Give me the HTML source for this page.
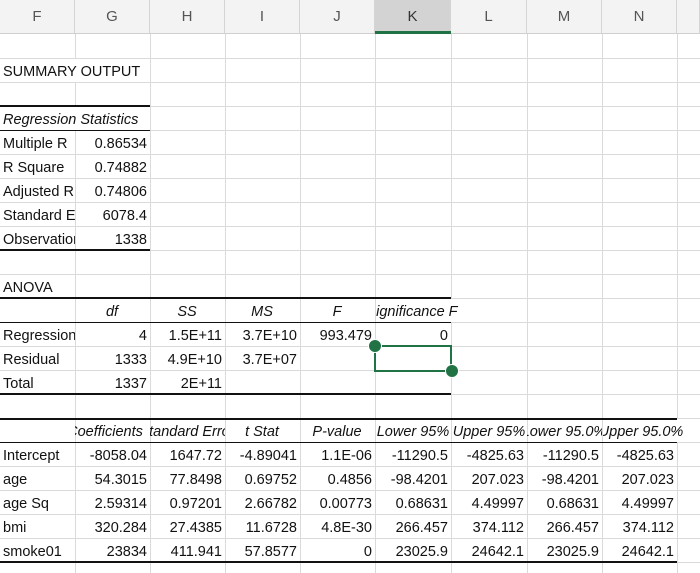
<!DOCTYPE html>
<html><head><meta charset="utf-8"><style>
body{margin:0;width:700px;height:573px;overflow:hidden;background:#fff;font-family:"Liberation Sans",Carlito,sans-serif;font-size:14.5px;color:#111;position:relative}
.a{position:absolute}
.c{position:absolute;height:23px;line-height:27px;overflow:hidden;white-space:nowrap;box-sizing:border-box;padding:0 3px}
.r{text-align:right}
.i{font-style:italic}
.m span{position:absolute;transform:translateX(-50%);white-space:nowrap}
.vl{position:absolute;top:0;width:1px;height:573px;background:#dadada}
.hl{position:absolute;left:0;width:700px;height:1px;background:#dadada}
.hd{position:absolute;top:0;height:33px;background:#f3f3f3;color:#555;text-align:center;line-height:34px;font-size:15px;border-right:1px solid #d4d4d4;box-sizing:border-box}
.k{position:absolute;height:2px;background:#111}
.t{position:absolute;height:1px;background:#111}
.w{background:#fff}
</style></head><body>
<div class="hl" style="top:58px"></div><div class="hl" style="top:82px"></div><div class="hl" style="top:106px"></div><div class="hl" style="top:130px"></div><div class="hl" style="top:154px"></div><div class="hl" style="top:178px"></div><div class="hl" style="top:202px"></div><div class="hl" style="top:226px"></div><div class="hl" style="top:250px"></div><div class="hl" style="top:274px"></div><div class="hl" style="top:298px"></div><div class="hl" style="top:322px"></div><div class="hl" style="top:346px"></div><div class="hl" style="top:370px"></div><div class="hl" style="top:394px"></div><div class="hl" style="top:418px"></div><div class="hl" style="top:442px"></div><div class="hl" style="top:466px"></div><div class="hl" style="top:490px"></div><div class="hl" style="top:514px"></div><div class="hl" style="top:538px"></div><div class="hl" style="top:562px"></div>
<div class="vl" style="left:75px"></div><div class="vl" style="left:150px"></div><div class="vl" style="left:225px"></div><div class="vl" style="left:300px"></div><div class="vl" style="left:375px"></div><div class="vl" style="left:451px"></div><div class="vl" style="left:527px"></div><div class="vl" style="left:602px"></div><div class="vl" style="left:677px"></div>
<div class="hd" style="left:0;width:75px">F</div><div class="hd" style="left:75px;width:75px">G</div><div class="hd" style="left:150px;width:75px">H</div><div class="hd" style="left:225px;width:75px">I</div><div class="hd" style="left:300px;width:75px">J</div><div class="hd" style="left:375px;width:76px;background:#d3d3d3;color:#333">K</div><div class="hd" style="left:451px;width:76px">L</div><div class="hd" style="left:527px;width:75px">M</div><div class="hd" style="left:602px;width:75px">N</div><div class="hd" style="left:677px;width:23px"></div>
<div class="a" style="left:0;top:33px;width:700px;height:1px;background:#cfcfcf"></div>
<div class="a" style="left:375px;top:31px;width:76px;height:3px;background:#217346"></div>
<div class="c w" style="left:0;top:59px;width:150px">SUMMARY OUTPUT</div>
<div class="c i w" style="left:0;top:107px;width:150px">Regression Statistics</div>
<div class="c" style="left:0;top:131px;width:75px">Multiple R</div><div class="c r" style="left:75px;top:131px;width:75px">0.86534</div>
<div class="c" style="left:0;top:155px;width:75px">R Square</div><div class="c r" style="left:75px;top:155px;width:75px">0.74882</div>
<div class="c" style="left:0;top:179px;width:75px">Adjusted R Square</div><div class="c r" style="left:75px;top:179px;width:75px">0.74806</div>
<div class="c" style="left:0;top:203px;width:75px">Standard Error</div><div class="c r" style="left:75px;top:203px;width:75px">6078.4</div>
<div class="c" style="left:0;top:227px;width:75px">Observations</div><div class="c r" style="left:75px;top:227px;width:75px">1338</div>
<div class="c" style="left:0;top:275px;width:75px">ANOVA</div>
<div class="c i m" style="left:75px;top:299px;width:75px"><span style="left:37px">df</span></div>
<div class="c i m" style="left:150px;top:299px;width:75px"><span style="left:37px">SS</span></div>
<div class="c i m" style="left:225px;top:299px;width:75px"><span style="left:37px">MS</span></div>
<div class="c i m" style="left:300px;top:299px;width:75px"><span style="left:37px">F</span></div>
<div class="c i m w" style="left:376px;top:299px;width:100px"><span style="left:36px">Significance F</span></div>
<div class="c" style="left:0;top:323px;width:75px">Regression</div><div class="c r" style="left:75px;top:323px;width:75px">4</div><div class="c r" style="left:150px;top:323px;width:75px">1.5E+11</div><div class="c r" style="left:225px;top:323px;width:75px">3.7E+10</div><div class="c r" style="left:300px;top:323px;width:75px">993.479</div><div class="c r" style="left:375px;top:323px;width:76px">0</div>
<div class="c" style="left:0;top:347px;width:75px">Residual</div><div class="c r" style="left:75px;top:347px;width:75px">1333</div><div class="c r" style="left:150px;top:347px;width:75px">4.9E+10</div><div class="c r" style="left:225px;top:347px;width:75px">3.7E+07</div>
<div class="c" style="left:0;top:371px;width:75px">Total</div><div class="c r" style="left:75px;top:371px;width:75px">1337</div><div class="c r" style="left:150px;top:371px;width:75px">2E+11</div>
<div class="c i m" style="left:75px;top:419px;width:75px"><span style="left:30px">Coefficients</span></div>
<div class="c i m" style="left:150px;top:419px;width:75px"><span style="left:37px">Standard Error</span></div>
<div class="c i m" style="left:225px;top:419px;width:75px"><span style="left:37px">t Stat</span></div>
<div class="c i m" style="left:300px;top:419px;width:75px"><span style="left:37px">P-value</span></div>
<div class="c i m" style="left:375px;top:419px;width:76px"><span style="left:38px">Lower 95%</span></div>
<div class="c i m" style="left:451px;top:419px;width:76px"><span style="left:38px">Upper 95%</span></div>
<div class="c i m" style="left:527px;top:419px;width:75px"><span style="left:37px">Lower 95.0%</span></div>
<div class="c i m w" style="left:603px;top:419px;width:90px"><span style="left:38px">Upper 95.0%</span></div>
<div class="c" style="left:0;top:443px;width:75px">Intercept</div><div class="c r" style="left:75px;top:443px;width:75px">-8058.04</div><div class="c r" style="left:150px;top:443px;width:75px">1647.72</div><div class="c r" style="left:225px;top:443px;width:75px">-4.89041</div><div class="c r" style="left:300px;top:443px;width:75px">1.1E-06</div><div class="c r" style="left:375px;top:443px;width:76px">-11290.5</div><div class="c r" style="left:451px;top:443px;width:76px">-4825.63</div><div class="c r" style="left:527px;top:443px;width:75px">-11290.5</div><div class="c r" style="left:602px;top:443px;width:75px">-4825.63</div>
<div class="c" style="left:0;top:467px;width:75px">age</div><div class="c r" style="left:75px;top:467px;width:75px">54.3015</div><div class="c r" style="left:150px;top:467px;width:75px">77.8498</div><div class="c r" style="left:225px;top:467px;width:75px">0.69752</div><div class="c r" style="left:300px;top:467px;width:75px">0.4856</div><div class="c r" style="left:375px;top:467px;width:76px">-98.4201</div><div class="c r" style="left:451px;top:467px;width:76px">207.023</div><div class="c r" style="left:527px;top:467px;width:75px">-98.4201</div><div class="c r" style="left:602px;top:467px;width:75px">207.023</div>
<div class="c" style="left:0;top:491px;width:75px">age Sq</div><div class="c r" style="left:75px;top:491px;width:75px">2.59314</div><div class="c r" style="left:150px;top:491px;width:75px">0.97201</div><div class="c r" style="left:225px;top:491px;width:75px">2.66782</div><div class="c r" style="left:300px;top:491px;width:75px">0.00773</div><div class="c r" style="left:375px;top:491px;width:76px">0.68631</div><div class="c r" style="left:451px;top:491px;width:76px">4.49997</div><div class="c r" style="left:527px;top:491px;width:75px">0.68631</div><div class="c r" style="left:602px;top:491px;width:75px">4.49997</div>
<div class="c" style="left:0;top:515px;width:75px">bmi</div><div class="c r" style="left:75px;top:515px;width:75px">320.284</div><div class="c r" style="left:150px;top:515px;width:75px">27.4385</div><div class="c r" style="left:225px;top:515px;width:75px">11.6728</div><div class="c r" style="left:300px;top:515px;width:75px">4.8E-30</div><div class="c r" style="left:375px;top:515px;width:76px">266.457</div><div class="c r" style="left:451px;top:515px;width:76px">374.112</div><div class="c r" style="left:527px;top:515px;width:75px">266.457</div><div class="c r" style="left:602px;top:515px;width:75px">374.112</div>
<div class="c" style="left:0;top:539px;width:75px">smoke01</div><div class="c r" style="left:75px;top:539px;width:75px">23834</div><div class="c r" style="left:150px;top:539px;width:75px">411.941</div><div class="c r" style="left:225px;top:539px;width:75px">57.8577</div><div class="c r" style="left:300px;top:539px;width:75px">0</div><div class="c r" style="left:375px;top:539px;width:76px">23025.9</div><div class="c r" style="left:451px;top:539px;width:76px">24642.1</div><div class="c r" style="left:527px;top:539px;width:75px">23025.9</div><div class="c r" style="left:602px;top:539px;width:75px">24642.1</div>
<div class="k" style="left:0;top:105px;width:150px"></div><div class="t" style="left:0;top:130px;width:150px"></div><div class="k" style="left:0;top:249px;width:150px"></div>
<div class="k" style="left:0;top:297px;width:451px"></div><div class="t" style="left:0;top:322px;width:451px"></div><div class="k" style="left:0;top:393px;width:451px"></div>
<div class="k" style="left:0;top:418px;width:677px"></div><div class="t" style="left:0;top:442px;width:677px"></div><div class="k" style="left:0;top:561px;width:677px"></div>
<div class="a" style="left:374px;top:345px;width:74px;height:23px;border:2px solid #217346"></div>
<div class="a" style="left:369px;top:340px;width:12px;height:12px;border-radius:50%;background:#217346;box-shadow:0 0 0 1px #fff"></div>
<div class="a" style="left:446px;top:365px;width:12px;height:12px;border-radius:50%;background:#217346;box-shadow:0 0 0 1px #fff"></div>
</body></html>
